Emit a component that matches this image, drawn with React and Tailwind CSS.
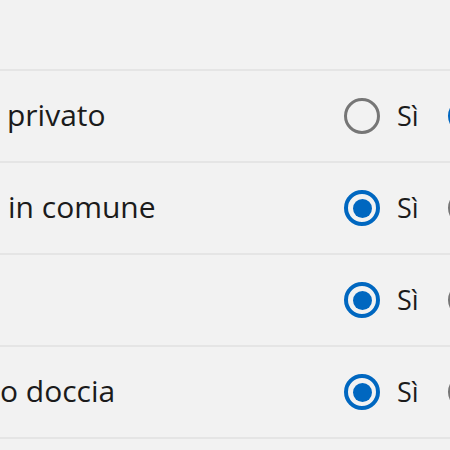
import React from "react";

function Radio({ checked }) {
  return checked ? (
    <div className="w-[36px] h-[36px] shrink-0 rounded-full border-[4px] border-[#0067c0] flex items-center justify-center">
      <div className="w-[19px] h-[19px] rounded-full bg-[#0067c0]" />
    </div>
  ) : (
    <div className="w-[36px] h-[36px] shrink-0 rounded-full border-[3.5px] border-[#767676]" />
  );
}

const rows = [
  { label: "privato", pad: "pl-[7px]", yes: false },
  { label: "in comune", pad: "pl-[8px]", yes: true },
  { label: "", pad: "pl-[8px]", yes: true },
  { label: "o doccia", pad: "pl-0", yes: true },
];

export default function App() {
  return (
    <div
      className="w-[450px] h-[450px] overflow-hidden bg-[#f2f2f2] text-[#1b1b1b]"
      style={{ fontFamily: '"Open Sans", "Noto Sans", sans-serif' }}
    >
      <div className="h-[69px]" />
      {rows.map((r, i) => (
        <div
          key={i}
          className="h-[92px] border-t-2 border-[#e5e5e5] flex items-center w-[520px]"
        >
          <div className={`w-[344px] shrink-0 text-[30px] leading-none ${r.pad} pb-[2px]`}>
            {r.label}
          </div>
          <Radio checked={r.yes} />
          <span className="ml-[17px] text-[27px] leading-none pb-[2px]">Sì</span>
          <div className="ml-[29px]">
            <Radio checked={!r.yes} />
          </div>
        </div>
      ))}
      <div className="border-t-2 border-[#e5e5e5]" />
    </div>
  );
}
